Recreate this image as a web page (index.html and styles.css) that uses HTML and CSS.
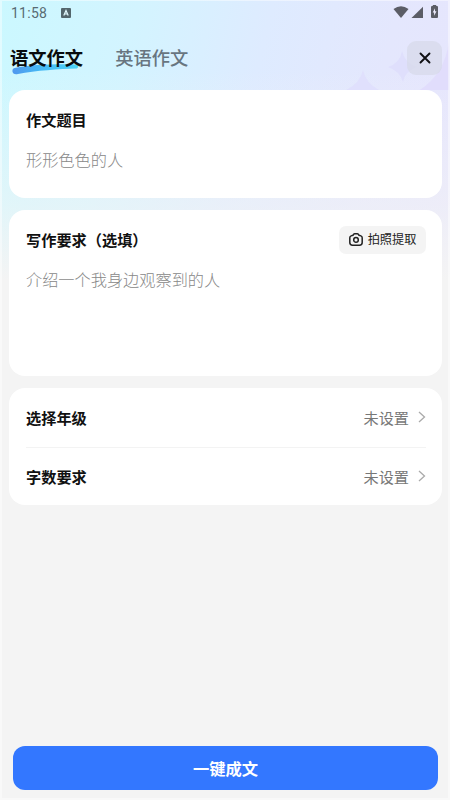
FILE: index.html
```html
<!DOCTYPE html>
<html lang="zh-CN">
<head>
<meta charset="utf-8">
<meta name="viewport" content="width=device-width, initial-scale=1">
<title>语文作文</title>
<link rel="stylesheet" href="styles.css">
</head>
<body>
<div class="screen">
  <svg class="sparkles" width="110" height="90" viewBox="0 0 110 90" aria-hidden="true">
    <path d="M23 70Q26 84 41 91H4Q20 84 23 70Z" fill="#e0e0fd"/>
    <path d="M62 51Q65 63 77 67Q65 71 63 82Q60 71 48 67Q60 63 62 51Z" fill="#dfdffc"/>
    <path d="M109 42V91H78Q104 76 109 42Z" fill="#e1ddfc"/>
  </svg>
  <header class="status">
    <span class="time">11:58</span>
    <svg class="notice" width="10" height="10" viewBox="0 0 10 10" aria-hidden="true">
      <rect width="10" height="10" rx="1" fill="#53666c"/>
      <path d="M2.8 7.6L5 2.5L7.2 7.6M3.7 6H6.3" fill="none" stroke="#e4fbff" stroke-width="1.2"/>
    </svg>
    <svg class="system" width="46" height="14" viewBox="0 0 46 14" aria-hidden="true">
      <path d="M0.5 4Q8 -1.6 15.5 4L8 13Z" fill="#5b5d66"/>
      <path d="M30 1.7V13H18.5Z" fill="#5b5d66"/>
      <path d="M39.8 1V0h3.4v1H44q1 0 1 1V12q0 1-1 1H39q-1 0-1-1V2q0-1 1-1Z" fill="#5b5d66"/>
      <path d="M42 3.2L39.7 7.5H41.1V10.8L43.5 6.2H42Z" fill="#f0edff"/>
    </svg>
  </header>
  <nav class="tabs">
    <a class="tab active">
      <svg class="swoosh" width="68" height="11" viewBox="0 0 68 11" aria-hidden="true">
        <defs><linearGradient id="stroke"><stop stop-color="#5198ee"/><stop offset=".4" stop-color="#46b7f4"/><stop offset="1" stop-color="#4ed5f8"/></linearGradient></defs>
        <path d="M2.500 4C20 .5 43 0 64 .5Q68 1.500 65 4.500C47 5 24 6.500 6 10Q1.500 11 .5 8Q0 4.500 2.500 4Z" fill="url(#stroke)"/>
      </svg>
      <span class="tab-text">语文作文</span>
    </a>
    <a class="tab">英语作文</a>
    <button class="close" aria-label="关闭">
      <svg width="12" height="12" viewBox="0 0 12 12"><path d="M1.500 1.500L10.500 10.500M10.500 1.500L1.500 10.500" stroke="#101014" stroke-width="1.900" stroke-linecap="round"/></svg>
    </button>
  </nav>
  <main class="cards">
    <section class="card topic">
      <div class="head"><h2>作文题目</h2></div>
      <p class="hint">形形色色的人</p>
    </section>
    <section class="card demand">
      <div class="head">
        <h2>写作要求（选填）</h2>
        <button class="photo">
          <svg width="14" height="13" viewBox="0 0 14 13" fill="none" stroke="#222" stroke-width="1.500" stroke-linejoin="round"><path d="M4.700 1.300Q5.100.8 5.700.8H8.300Q8.900.8 9.300 1.300L10 2.200L11.900 2.900Q13.200 3.400 13.200 4.800V9.500Q13.200 12.200 10.500 12.200H3.500Q.8 12.200.8 9.500V4.800Q.8 3.400 2.100 2.900L4 2.200Z"/><circle cx="7" cy="6.900" r="2.300"/></svg>
          <span>拍照提取</span>
        </button>
      </div>
      <p class="hint">介绍一个我身边观察到的人</p>
    </section>
    <section class="card options">
      <div class="row">
        <h2>选择年级</h2><span class="value">未设置</span>
        <svg width="8" height="12" viewBox="0 0 8 12"><path d="M1 1L6.500 6L1 11" fill="none" stroke="#aaa" stroke-width="1.300"/></svg>
      </div>
      <div class="row">
        <h2>字数要求</h2><span class="value">未设置</span>
        <svg width="8" height="12" viewBox="0 0 8 12"><path d="M1 1L6.500 6L1 11" fill="none" stroke="#aaa" stroke-width="1.300"/></svg>
      </div>
    </section>
  </main>
  <button class="submit">一键成文</button>
</div>
</body>
</html>
```
FILE: styles.css
```css
* { box-sizing: border-box; }
body { margin: 0; background: #fafafa; font-family: "Noto Sans CJK SC", sans-serif; }
button { border: 0; padding: 0; margin: 0; font-family: inherit; }
h2, p { margin: 0; }
.screen {
  position: relative;
  height: 800px;
  display: flex;
  flex-direction: column;
  padding: 1px 8px 10px 9px;
  overflow: hidden;
  background:
    linear-gradient(to bottom, rgba(244,244,244,0) 70px, rgba(244,244,244,.5) 205px, #f4f4f4 280px),
    linear-gradient(103deg, #cbf8ff 0, #d3f4ff 22%, #deebff 43%, #e4e7fd 63%, #e7e5fd 82%, #e7e2fd 100%);
}
.screen::after {
  content: "";
  position: absolute;
  inset: 0;
  border: solid rgba(255,255,255,.45);
  border-width: 1px 2px 2px;
  pointer-events: none;
}
.sparkles { position: absolute; right: 0; top: 0; }
.status { position: relative; height: 24px; display: flex; align-items: center; padding: 0 2px; }
.time { font: 14px/24px Roboto, sans-serif; letter-spacing: .25px; color: #586b72; width: 50px; }
.notice { margin-top: -1px; }
.system { margin-left: auto; margin-right: 1px; margin-top: -2px; }
.tabs { position: relative; height: 65px; display: flex; align-items: center; gap: 32px; padding-left: 1px; }
.tab { position: relative; font-size: 18.3px; line-height: 28px; margin-bottom: 1px; font-weight: 500; color: #68757f; }
.tab.active { font-weight: 700; color: #080b0d; }
.tab-text { position: relative; }
.swoosh { position: absolute; left: 2px; top: 21px; }
.close { margin-left: auto; width: 35px; height: 34px; border-radius: 9px; background: rgba(215,217,233,.75); display: grid; place-items: center; }
.cards { position: relative; display: flex; flex-direction: column; gap: 12px; }
.card { background: #fff; border-radius: 16px; padding: 0 16px 0 17px; }
.topic { height: 108px; padding-top: 14px; }
.demand { height: 166px; padding-top: 14px; }
.options { height: 117px; }
.head { height: 29px; display: flex; justify-content: space-between; align-items: center; }
h2 { font-size: 15.2px; line-height: 24px; font-weight: 700; color: #111; }
.hint { font-size: 16.2px; line-height: 24px; margin-top: 14px; font-weight: 300; color: #888; }
.photo { width: 87px; height: 28px; margin-top: 2px; border-radius: 7px; background: #f4f4f4; display: flex; align-items: center; justify-content: center; gap: 5px; font-size: 12.2px; line-height: 20px; color: #222; }
.photo span { padding-bottom: 2px; }
.row { height: 59px; display: flex; align-items: center; }
.row + .row { height: 58px; border-top: 1px solid #f3f3f3; }
.row h2, .value { padding-bottom: 2px; }
.value { margin-left: auto; margin-right: 9px; font-size: 15.2px; line-height: 24px; color: #777; }
.row svg { margin-bottom: 1px; }
.submit { position: relative; margin: auto 4px 0; height: 44px; border-radius: 12px; background: #3377ff; color: #fff; font-size: 16.3px; font-weight: 700; }
```
